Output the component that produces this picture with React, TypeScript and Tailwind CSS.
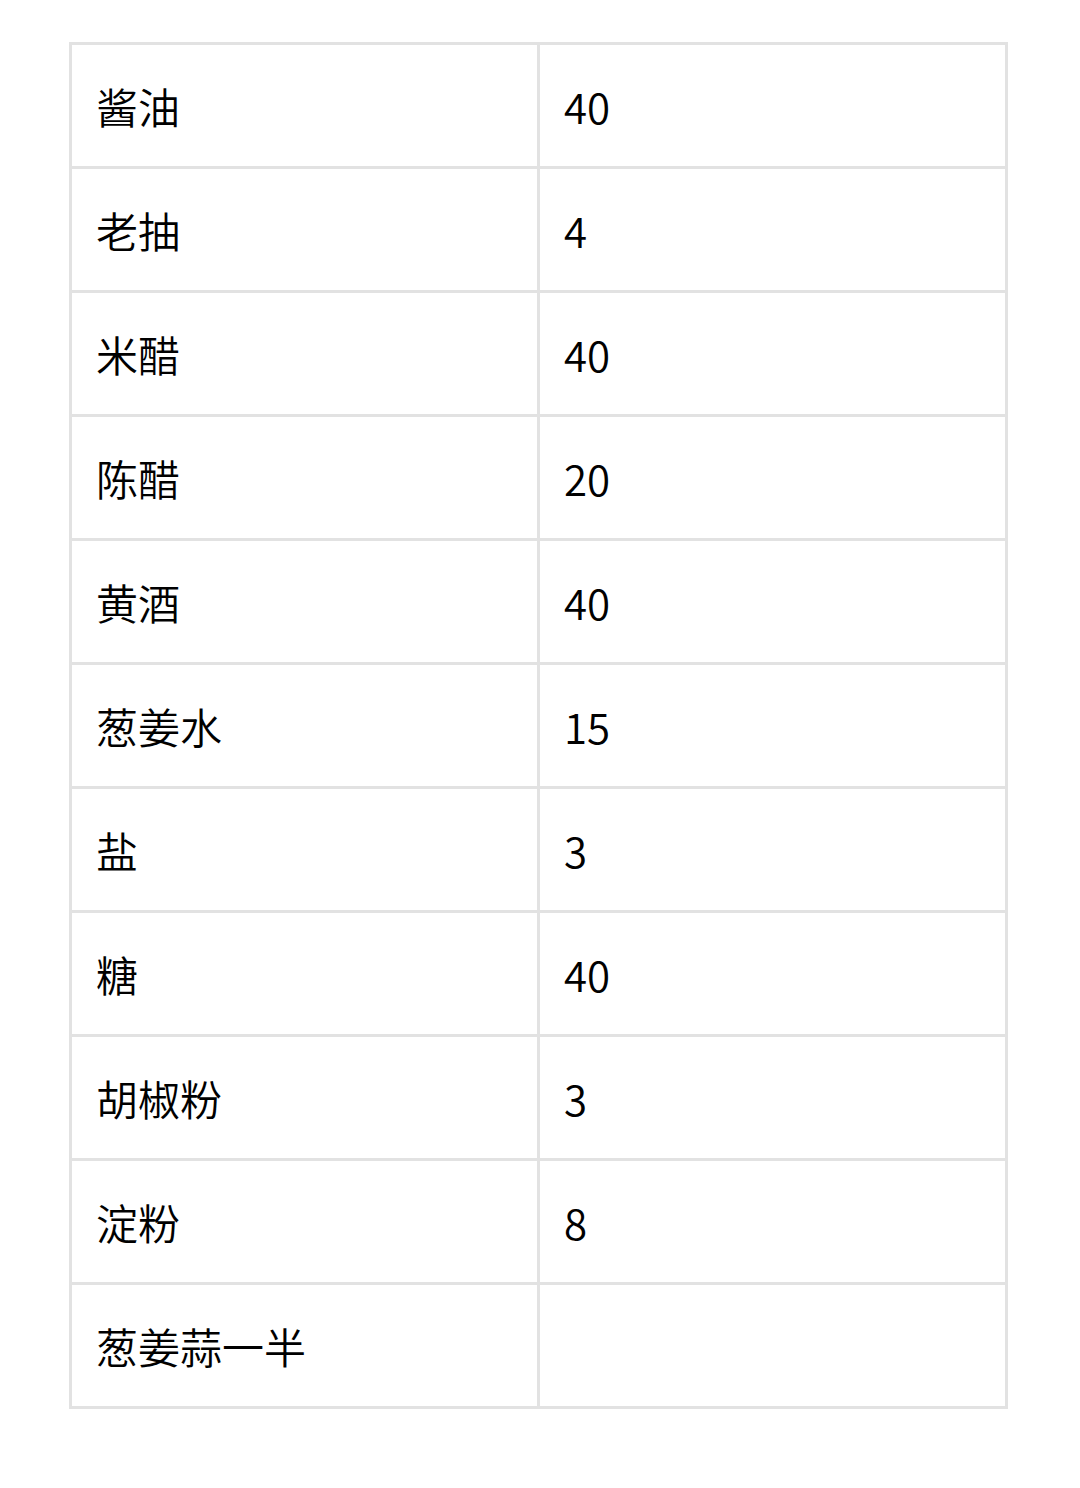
const rows: [string, string][] = [
  ['酱油', '40'],
  ['老抽', '4'],
  ['米醋', '40'],
  ['陈醋', '20'],
  ['黄酒', '40'],
  ['葱姜水', '15'],
  ['盐', '3'],
  ['糖', '40'],
  ['胡椒粉', '3'],
  ['淀粉', '8'],
  ['葱姜蒜一半', ''],
];

const App = () => {
  return (
    <div className="min-h-screen bg-white pt-[42px] pl-[69px]" style={{ fontFamily: '"Noto Sans CJK SC", "Noto Sans", sans-serif' }}>
      <div className="grid w-[939px] grid-cols-[468px_468px] border-l-[3px] border-t-[3px] border-[#e2e2e2] text-[42px] [font-weight:350] text-black">
        {rows.map(([name, amount], i) => (
          <div key={i} className="contents">
            <div className="flex h-[124px] items-center border-b-[3px] border-r-[3px] border-[#e2e2e2] px-[24px]">
              {name}
            </div>
            <div className="flex h-[124px] items-center border-b-[3px] border-r-[3px] border-[#e2e2e2] px-[24px]">
              {amount}
            </div>
          </div>
        ))}
      </div>
    </div>
  );
};

export default App;
